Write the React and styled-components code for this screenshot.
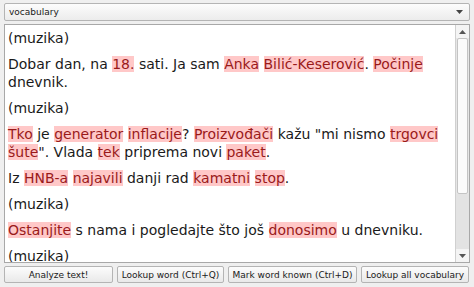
import React from 'react';
import styled, { createGlobalStyle } from 'styled-components';

const Global = createGlobalStyle`
	html, body {
		margin: 0;
		padding: 0;
		background: #efefef;
	}
	* {
		box-sizing: border-box;
	}
`;

const paragraphs = [
	[['(muzika)']],
	[
		['Dobar dan, na '],
		['18.', true],
		[' sati. Ja sam '],
		['Anka', true],
		[' '],
		['Bilić-Keserović', true],
		['. '],
		['Počinje', true],
		[' dnevnik.'],
	],
	[['(muzika)']],
	[
		['Tko', true],
		[' je '],
		['generator', true],
		[' '],
		['inflacije', true],
		['? '],
		['Proizvođači', true],
		[' kažu "mi nismo '],
		['trgovci', true],
		[' '],
		['šute', true],
		['". Vlada '],
		['tek', true],
		[' priprema novi '],
		['paket', true],
		['.'],
	],
	[
		['Iz '],
		['HNB-a', true],
		[' '],
		['najavili', true],
		[' danji rad '],
		['kamatni', true],
		[' '],
		['stop', true],
		['.'],
	],
	[['(muzika)']],
	[
		['Ostanjite', true],
		[' s nama i pogledajte što još '],
		['donosimo', true],
		[' u dnevniku.'],
	],
	[['(muzika)']],
];

const buttons = [
	['Analyze text!', 109],
	['Lookup word (Ctrl+Q)', 107],
	['Mark word known (Ctrl+D)', 129],
	['Lookup all vocabulary', 108],
];

const App = () => {
	return (
		<Window>
			<Global />
			<Combo>
				<span>vocabulary</span>
				<Arrow viewBox='0 0 7 4'>
					<path d='M0 0 L7 0 L3.5 4 Z' fill='#444' />
				</Arrow>
			</Combo>
			<TextArea>
				<Content>
					{paragraphs.map((p, i) => (
						<Para key={i}>
							{p.map(([text, unknown], j) =>
								unknown ? <Word key={j}>{text}</Word> : <span key={j}>{text}</span>
							)}
						</Para>
					))}
				</Content>
				<ScrollBar>
					<ScrollButton>
						<svg width='7' height='4' viewBox='0 0 7 4'>
							<path d='M0 4 L7 4 L3.5 0 Z' fill='#555' />
						</svg>
					</ScrollButton>
					<Thumb />
					<Track />
					<ScrollButton>
						<svg width='7' height='4' viewBox='0 0 7 4'>
							<path d='M0 0 L7 0 L3.5 4 Z' fill='#555' />
						</svg>
					</ScrollButton>
				</ScrollBar>
			</TextArea>
			<ButtonRow>
				{buttons.map(([label, w]) => (
					<Button key={label} $w={w}>
						{label}
					</Button>
				))}
			</ButtonRow>
		</Window>
	);
};

export default App;

// ########### styled components ###########
const Window = styled.div`
	width: 474px;
	height: 287px;
	display: flex;
	flex-direction: column;
	gap: 3px;
	padding: 3px 4px 4px 4px;
	font-family: 'DejaVu Sans', sans-serif;
	overflow: hidden;
`;

const Combo = styled.div`
	height: 18px;
	flex: none;
	display: flex;
	align-items: center;
	justify-content: space-between;
	padding: 0 6px 0 4px;
	border: 1px solid #b4b4b4;
	border-radius: 2px;
	background: linear-gradient(#fcfcfc, #ececec);
	font-size: 9px;
	color: #202020;
`;

const Arrow = styled.svg`
	width: 7px;
	height: 4px;
`;

const TextArea = styled.div`
	flex: 1;
	min-height: 0;
	display: flex;
	border: 1px solid #a8a8a8;
	background: #fff;
	overflow: hidden;
`;

const Content = styled.div`
	flex: 1;
	padding: 4px 4px 0 3px;
	font-size: 14px;
	line-height: 18px;
	color: #1a1a1a;
	overflow: hidden;
`;

const Para = styled.p`
	margin: 0 0 8px 0;
`;

const Word = styled.span`
	background: #ffc8c8;
	color: #9a1a1a;
`;

const ScrollBar = styled.div`
	width: 14px;
	flex: none;
	display: flex;
	flex-direction: column;
	border-left: 1px solid #d0d0d0;
	background: #e6e6e6;
`;

const ScrollButton = styled.div`
	height: 13px;
	flex: none;
	display: flex;
	align-items: center;
	justify-content: center;
	background: #f4f4f4;
`;

const Thumb = styled.div`
	height: 156px;
	flex: none;
	margin: 0 1px;
	border: 1px solid #c4c4c4;
	border-radius: 2px;
	background: #fbfbfb;
`;

const Track = styled.div`
	flex: 1;
	background: #e3e3e3;
`;

const ButtonRow = styled.div`
	height: 17px;
	flex: none;
	display: flex;
	gap: 4px;
`;

const Button = styled.button`
	width: ${(p) => p.$w}px;
	flex: none;
	height: 17px;
	padding: 0;
	display: flex;
	align-items: center;
	justify-content: center;
	border: 1px solid #b4b4b4;
	border-radius: 2px;
	background: linear-gradient(#fcfcfc, #e9e9e9);
	font-family: 'DejaVu Sans', sans-serif;
	font-size: 9px;
	color: #202020;
	white-space: nowrap;
`;
// ########### styled components ###########
